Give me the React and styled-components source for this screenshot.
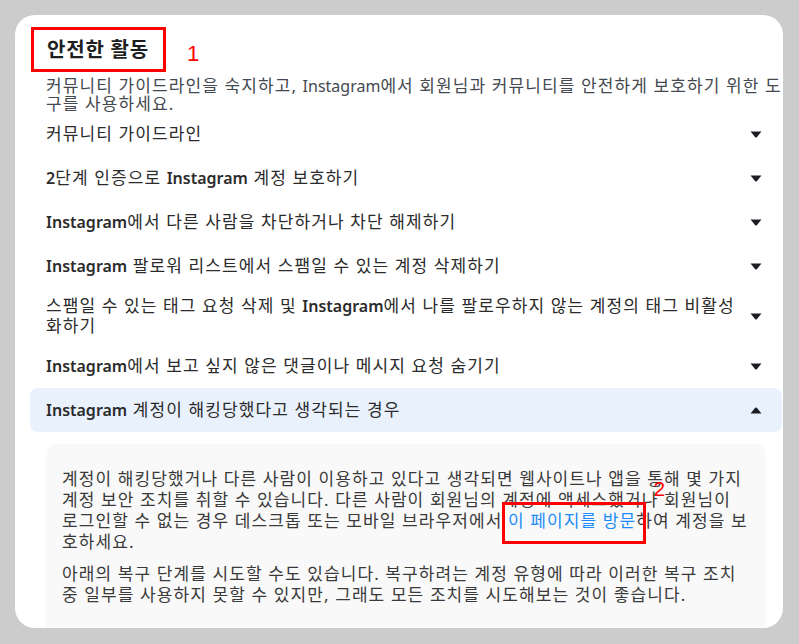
import React from "react";
import styled, { createGlobalStyle } from "styled-components";

const GlobalStyle = createGlobalStyle`
  html, body { margin: 0; padding: 0; }
  body {
    background: #cccccc;
    font-family: "Noto Sans", "Noto Sans CJK KR", sans-serif;
    color: #1c1e21;
  }
  * { box-sizing: border-box; }
`;

const Page = styled.div`
  height: 100vh;
  padding: 15px 16px 16px 15px;
`;

const Card = styled.div`
  position: relative;
  height: 613px;
  background: #ffffff;
  border-radius: 20px;
  overflow: hidden;
  padding: 23px 1px 0 15px;
`;

const Header = styled.div`
  padding: 0 0 0 16px;
  margin-right: -1px;
`;

const Title = styled.h2`
  margin: 0;
  font-size: 20px;
  letter-spacing: 0.8px;
  line-height: 24px;
  font-weight: 700;
  color: #1c1e21;
  padding-left: 1px;
`;

const BodyText = styled.div`
  font-size: 17px;
  letter-spacing: 1.1px;
  word-break: break-all;
`;

const Description = styled(BodyText)`
  margin: 15px 0 0;
  line-height: 17px;
  color: #444950;
`;

const List = styled.div`
  display: flex;
  flex-direction: column;
`;

const Row = styled.div`
  display: flex;
  align-items: center;
  gap: 15px;
  min-height: 44px;
  padding: 8px 20px 8px 16px;
  border-radius: 8px;
  background: ${(p) => (p.$open ? "#e9f1fd" : "transparent")};
`;

const RowText = styled(BodyText)`
  flex: 1;
  line-height: 20px;
  color: #2b2b2b;
`;

const Latin = styled.span`
  font-size: 16px;
  letter-spacing: 0;
  font-weight: ${(p) => (p.$bold ? 600 : 400)};
`;

const Chevron = styled.svg`
  flex: none;
  width: 12px;
  height: 7px;
  fill: #1c1e21;
  transform: ${(p) => (p.$up ? "rotate(180deg)" : "none")};
`;

const Panel = styled.div`
  margin: 12px 16px 0 16px;
  padding: 24px 16px 40px 16px;
  background: #f9f9f9;
  border-radius: 10px;
`;

const Para = styled(BodyText)`
  margin: 0 0 11px;
  line-height: 21px;
  color: #3a3a3a;
`;

const Link = styled.a`
  position: relative;
  color: #1d8cf8;
  text-decoration: none;
`;

const MarkBox = styled.span`
  position: absolute;
  border: 3px solid #ff0000;
  pointer-events: none;
`;

const TitleMark = styled(MarkBox)`
  left: 16px;
  top: 12px;
  width: 135px;
  height: 45px;
`;

const LinkMark = styled(MarkBox)`
  left: -6px;
  right: -10px;
  top: -7px;
  bottom: -12px;
`;

const MarkNum = styled.span`
  position: absolute;
  color: #ff0000;
  font-family: "Liberation Sans", sans-serif;
  font-size: ${(p) => p.$size || 22}px;
  letter-spacing: 0;
  line-height: 1;
`;

const TitleNum = styled(MarkNum)`
  left: 172px;
  top: 28px;
`;

const LinkNum = styled(MarkNum)`
  right: -29px;
  top: -31px;
`;

function Mixed({ text, bold }) {
  const parts = text.split(/([A-Za-z0-9]+)/);
  return parts.map((part, i) =>
    /^[A-Za-z0-9]+$/.test(part) ? (
      <Latin key={i} $bold={bold}>
        {part}
      </Latin>
    ) : (
      <React.Fragment key={i}>{part}</React.Fragment>
    )
  );
}

const items = [
  "커뮤니티 가이드라인",
  "2단계 인증으로 Instagram 계정 보호하기",
  "Instagram에서 다른 사람을 차단하거나 차단 해제하기",
  "Instagram 팔로워 리스트에서 스팸일 수 있는 계정 삭제하기",
  "스팸일 수 있는 태그 요청 삭제 및 Instagram에서 나를 팔로우하지 않는 계정의 태그 비활성화하기",
  "Instagram에서 보고 싶지 않은 댓글이나 메시지 요청 숨기기",
  "Instagram 계정이 해킹당했다고 생각되는 경우",
];

function Triangle({ up }) {
  return (
    <Chevron viewBox="0 0 12 7" $up={up}>
      <path d="M0.5 0.5 H11.5 L6.8 6.2 Q6 7 5.2 6.2 Z" />
    </Chevron>
  );
}

export default function App() {
  return (
    <>
      <GlobalStyle />
      <Page>
        <Card>
          <Header>
            <Title>안전한 활동</Title>
            <Description>
              <Mixed text="커뮤니티 가이드라인을 숙지하고, Instagram에서 회원님과 커뮤니티를 안전하게 보호하기 위한 도구를 사용하세요." />
            </Description>
          </Header>
          <List>
            {items.map((t, i) => {
              const open = i === items.length - 1;
              return (
                <Row key={t} $open={open}>
                  <RowText>
                    <Mixed text={t} bold />
                  </RowText>
                  <Triangle up={open} />
                </Row>
              );
            })}
          </List>
          <Panel>
            <Para>
              계정이 해킹당했거나 다른 사람이 이용하고 있다고 생각되면 웹사이트나 앱을 통해 몇 가지 계정 보안 조치를 취할 수 있습니다. 다른 사람이 회원님의 계정에 액세스했거나 회원님이 로그인할 수 없는 경우 데스크톱 또는 모바일 브라우저에서{" "}
              <Link href="#">
                이 페이지를 방문
                <LinkMark />
                <LinkNum $size={21}>2</LinkNum>
              </Link>
              하여 계정을 보호하세요.
            </Para>
            <Para>
              아래의 복구 단계를 시도할 수도 있습니다. 복구하려는 계정 유형에 따라 이러한 복구 조치 중 일부를 사용하지 못할 수 있지만, 그래도 모든 조치를 시도해보는 것이 좋습니다.
            </Para>
          </Panel>
          <TitleMark />
          <TitleNum>1</TitleNum>
        </Card>
      </Page>
    </>
  );
}
